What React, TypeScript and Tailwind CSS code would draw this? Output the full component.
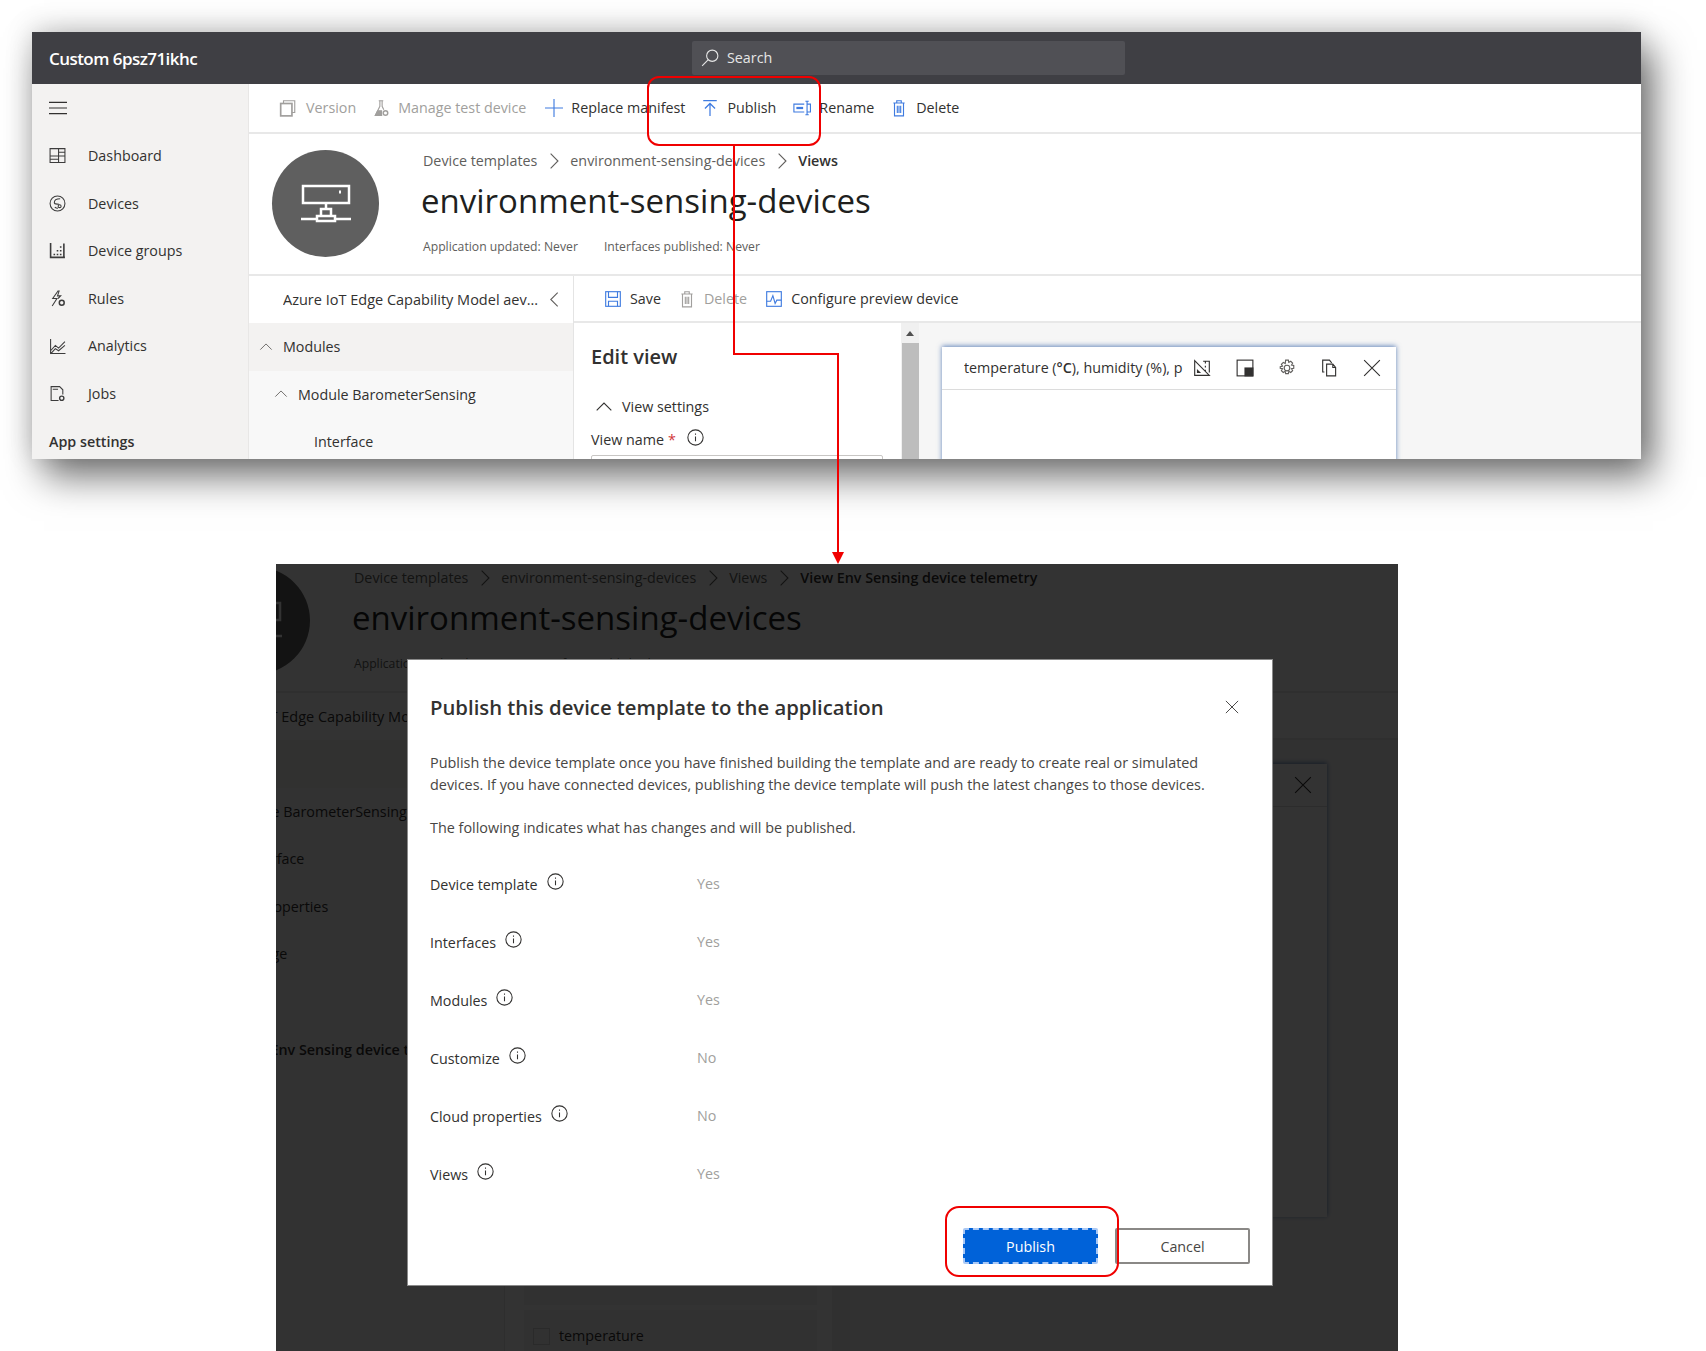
import type { ReactNode } from "react";

const Ico = ({ children, className = "w-[18px] h-[18px]" }: { children: ReactNode; className?: string }) => (
  <svg viewBox="0 0 16 16" fill="none" stroke="currentColor" strokeWidth="1" className={`shrink-0 ${className}`}>
    {children}
  </svg>
);

const InfoIcon = ({ className = "w-[17px] h-[17px] text-[#323130]" }: { className?: string }) => (
  <Ico className={className}>
    <circle cx="8" cy="8" r="7.2" />
    <path d="M8 7v4.6M8 4.2v1.2" />
  </Ico>
);

const Chevron = ({ dir = "right", className = "" }: { dir?: "right" | "left" | "up"; className?: string }) => {
  const d = dir === "right" ? "M5 1.5 11.5 8 5 14.5" : dir === "left" ? "M11 1.5 4.5 8l6.5 6.5" : "M1.5 11 8 4.5l6.5 6.5";
  return (
    <Ico className={className}>
      <path d={d} />
    </Ico>
  );
};

const navItems: { label: string; icon: ReactNode }[] = [
  { label: "Dashboard", icon: <path d="M1 1.500h14v13H1zM1 8.500h14M9 1.500v13M1 11.500h8M9 5h6" /> },
  { label: "Devices", icon: <><circle cx="8" cy="8" r="7" /><path d="M10.500 3.500C7 3.500 5 5 5 7c0 2.500 4 1 4.500 2M8.500 12.500C7 12.500 6 12 5.500 11.500" /><circle cx="10" cy="10.500" r="1.400" /></> },
  { label: "Device groups", icon: <path d="M1.500 1v13.500H15M5 12.500v-1.500M8 12.500v-1.500M8 9V7.500M11 12.500v-1.500M11 9V7.500M11 5.500V4M14 14v-12.500" strokeWidth="1.500" /> },
  { label: "Rules", icon: <><path d="M8.500 1 3.500 8h4l-4.500 7M8 1h1.500L8 5.500h3L8.500 8" /><circle cx="12" cy="12" r="2.300" strokeWidth="1.400" /></> },
  { label: "Analytics", icon: <path d="M1.500 1v13.500H15.500M1.500 12 6 7l3 2.500 6-6M1.500 15 6 10l3 2 6-5" /> },
  { label: "Jobs", icon: <><path d="M9 14.500H2V1.500h8l3 3V9M3.500 4h5" /><circle cx="12" cy="12.500" r="2" strokeWidth="1.300" /></> },
];

const Sidebar = () => (
  <aside className="w-[217px] shrink-0 bg-[#f3f2f1] border-r border-[#e8e7e6] text-[14.3px] text-[#323130]">
    <div className="h-[48px] flex items-center pl-[17px]">
      <Ico className="w-[18px] h-[18px]">
        <path d="M0 3h16M0 8h16M0 13h16" />
      </Ico>
    </div>
    {navItems.map((n) => (
      <div key={n.label} className="h-[47.6px] flex items-center pl-[17px] gap-[22px]">
        <Ico className="w-[17px] h-[17px] text-[#3c3c3c]">{n.icon}</Ico>
        <span>{n.label}</span>
      </div>
    ))}
    <div className="h-[47.6px] flex items-center pl-[17px] font-semibold">App settings</div>
  </aside>
);

const blue = "text-[#3f7be0]";
const gray = "text-[#a19f9d]";

const ToolItem = ({ icon, label, off, gap = "gap-[8px]" }: { icon: ReactNode; label: string; off?: boolean; gap?: string }) => (
  <div className={`flex items-center ${gap} ${off ? gray : "text-[#323130]"}`}>
    <Ico className={`w-[18px] h-[18px] ${off ? gray : blue}`}>{icon}</Ico>
    <span>{label}</span>
  </div>
);

const trash = <path d="M3 3.500h10M6 3.500V1.500h4v2M4 3.500v11.500h8V3.500M6.500 6v6.500M8 6v6.500M9.500 6v6.500" />;

const MainToolbar = () => (
  <div className="h-[50px] border-b-2 border-[#e8e8e8] bg-white flex items-center pl-[30px] gap-[16px] text-[14.3px]">
    <ToolItem off gap="gap-[9px]" label="Version" icon={<><rect x="1.500" y="4" width="10" height="11" strokeWidth="1.500" /><path d="M4 4V1.500h10V12h-2.500" /></>} />
    <ToolItem off label="Manage test device" icon={<><path d="M6 1.500h4M7 1.500v5L3 14.500h6M9 1.500v5l1.500 3" /><path d="M5 10.500 3 14.500h5.500v-4z" fill="currentColor" /><circle cx="12" cy="12.500" r="2" strokeWidth="1.300" /></>} />
    <ToolItem gap="gap-[8px] ml-[3px]" label="Replace manifest" icon={<path d="M8 0v16M0 8h16" />} />
    <ToolItem label="Publish" icon={<path d="M2 1.500h12M8 15V4M3.500 8.500 8 4l4.500 4.500" strokeWidth="1.100" />} />
    <ToolItem gap="gap-[8px] ml-[1px]" label="Rename" icon={<><path d="M10 4.500H.800v7H10" /><path d="M3 8h6" strokeWidth="2" /><path d="M11 2h3M11 14h3M12.500 2v12M13 4.500h2.500v7H13" /></>} />
    <ToolItem label="Delete" icon={trash} />
  </div>
);

const Crumbs = ({ items }: { items: string[] }) => (
  <div className="flex items-center gap-[7.500px] text-[14.3px] text-[#605e5c] leading-[20px]">
    {items.map((c, i) => (
      <div key={c} className="flex items-center gap-[7.500px]">
        {i > 0 && <Chevron className="w-[18px] h-[18px]" />}
        <span className={i === items.length - 1 ? "font-semibold text-[#323130]" : ""}>{c}</span>
      </div>
    ))}
  </div>
);

const treeRows: { label: string; pl: string; cls?: string; chevron?: string }[] = [
  { label: "Modules", pl: "pl-[34px]", cls: "bg-[#f3f2f1]", chevron: "left-[10px]" },
  { label: "Module BarometerSensing", pl: "pl-[49px]", chevron: "left-[25px]" },
  { label: "Interface", pl: "pl-[65px]" },
  { label: "Properties", pl: "pl-[79px]" },
  { label: "Manage", pl: "pl-[54px]" },
  { label: "", pl: "pl-[65px]" },
  { label: "View Env Sensing device telemetry", pl: "pl-[54px]", cls: "font-semibold" },
];

const TreePanel = () => (
  <div className="w-[325px] shrink-0 bg-[#f8f8f8] border-r border-[#e4e4e4] text-[14.3px] text-[#323130]">
    <div className="h-[47px] flex items-center pl-[34px] bg-white">
      <span className="w-[259px] truncate text-[14.5px]">Azure IoT Edge Capability Model aev...</span>
      <Chevron dir="left" className="ml-[4px] w-[17px] h-[17px] text-[#605e5c]" />
    </div>
    {treeRows.map((r) => (
      <div key={r.label || "blank"} className={`relative h-[47.6px] flex items-center whitespace-nowrap ${r.pl} ${r.cls ?? ""}`}>
        {r.chevron && <Chevron dir="up" className={`absolute ${r.chevron} w-[14px] h-[14px] text-[#605e5c]`} />}
        {r.label}
      </div>
    ))}
  </div>
);

const EditPanel = () => (
  <div className="w-[327px] shrink-0 bg-white px-[17px] text-[#323130]">
    <h3 className="mt-[19px] text-[20px] leading-[30px] font-semibold">Edit view</h3>
    <div className="mt-[23px] flex items-center gap-[9px] text-[14.3px] leading-[24px] pl-[4px]">
      <Chevron dir="up" className="w-[18px] h-[18px]" />
      <span>View settings</span>
    </div>
    <div className="mt-[9px] flex items-center text-[14.3px] leading-[24px]">
      <span>View name</span>
      <span className="ml-[4px] text-[#d13438]">*</span>
      <InfoIcon className="ml-[11px] -mt-[6px] w-[17px] h-[17px] text-[#323130]" />
    </div>
    <div className="mt-[3px] h-[32px] border border-[#c8c6c4] rounded-[2px] w-[292px]" />
    <div className="mt-[377px] ml-[2px] w-[293px] h-[24px] bg-[#f6f6f6]" />
    <div className="mt-[5px] ml-[2px] w-[293px] h-[52px] bg-[#f6f6f6] flex items-center gap-[9px] pl-[9px] text-[14.3px]">
      <span className="w-[17px] h-[17px] border border-[#d0d0d0]" />
      temperature
    </div>
  </div>
);

const Scrollbar = () => (
  <div className="w-[18px] shrink-0 bg-[#f0f0f0] flex flex-col items-center">
    <div className="h-[20px] flex items-center">
      <div className="w-0 h-0 border-x-[4px] border-x-transparent border-b-[5px] border-b-[#505050]" />
    </div>
    <div className="h-[300px] w-[17px] bg-[#bdbdbd]" />
  </div>
);

const TileCard = () => (
  <div className="mt-[24px] ml-[23px] w-[454px] h-[453px] bg-white shadow-[0_-1px_5px_rgba(50,95,165,0.75)]">
    <div className="h-[43px] border-b border-[#dcdcdc] flex items-center pl-[22px] text-[#323130]">
      <div className="w-[219px] overflow-hidden whitespace-nowrap text-[14.3px]">
        temperature (<span className="font-semibold">°C</span>), humidity (%), pressure (hPa)
      </div>
      <div className="ml-[10px] flex items-center gap-[24.500px]">
        <Ico className="w-[18px] h-[18px]">
          <path d="M1.500 1.500 14.500 14.500H1.500zM4 10v2h2zM9 2h5.500v10M11 2.500v1.500M11 6v1.500M11 9.500V11" />
        </Ico>
        <Ico className="w-[18px] h-[18px]">
          <rect x="1" y="1" width="14" height="14" />
          <rect x="8" y="8" width="7" height="7" fill="currentColor" />
        </Ico>
        <Ico className="w-[18px] h-[18px] text-[#605e5c]">
          <circle cx="8" cy="8" r="2.500" />
          <path d="M6.800 1h2.400l.4 2 1.700-1 1.700 1.700-1 1.700 2 .4v2.400l-2 .4 1 1.700-1.700 1.700-1.700-1-.4 2H6.800l-.4-2-1.700 1-1.700-1.700 1-1.700-2-.4V6.800l2-.4-1-1.700 1.700-1.700 1.700 1z" />
        </Ico>
        <Ico className="w-[18px] h-[18px]">
          <path d="M3 11.500H1.500V1h6l2 2.500M5 4.500h5.500l2.500 3V15H5zM10.500 4.500v3H13" />
        </Ico>
        <Ico className="w-[18px] h-[18px]">
          <path d="M1 1l14 14M15 1 1 15" />
        </Ico>
      </div>
    </div>
  </div>
);

// same page sits under both the top window and the dimmed dialog shot
const TemplatePage = ({ crumbs }: { crumbs: string[] }) => (
  <div className="w-[1392px] shrink-0 bg-white">
    <div className="h-[142px] flex border-b-2 border-[#e8e8e8]">
      <div className="ml-[23px] mt-[16px] w-[107px] h-[107px] rounded-full bg-[#5f5f5f] flex items-center justify-center text-white">
        <svg viewBox="0 0 50 40" fill="none" stroke="currentColor" strokeWidth="2.500" className="w-[50px] h-[40px]">
          <rect x="2" y="2" width="46" height="17" />
          <path d="M38 8h2" strokeWidth="3" />
          <path d="M25 19v6M20 32v-7h10v7M16 37h18v-5H16zM0 35h16M34 35h16" />
        </svg>
      </div>
      <div className="ml-[44px] pt-[17px]">
        <Crumbs items={crumbs} />
        <h1 className="mt-[7px] -ml-[2px] text-[33px] leading-[46px] text-[#201f1e] whitespace-nowrap">environment-sensing-devices</h1>
        <div className="mt-[14px] flex gap-[26px] text-[12.2px] leading-[18px] text-[#605e5c]">
          <span>Application updated: Never</span>
          <span>Interfaces published: Never</span>
        </div>
      </div>
    </div>
    <div className="flex h-[660px]">
      <TreePanel />
      <div className="flex-1 min-w-0">
        <div className="h-[47px] border-b-2 border-[#e8e8e8] flex items-center pl-[30px] gap-[17px] text-[14.3px]">
          <ToolItem label="Save" icon={<><rect x="1.500" y="1.500" width="13" height="13" /><path d="M4 1.500v5h8v-5M4 14.500V10h8v4.500" /></>} />
          <ToolItem off label="Delete" icon={trash} />
          <ToolItem gap="gap-[8px] ml-[1px]" label="Configure preview device" icon={<><rect x="1.500" y="1.500" width="13" height="13" /><path d="M1.500 10H5l2-5 2 7 1.500-3h4" /></>} />
        </div>
        <div className="flex h-[613px]">
          <EditPanel />
          <Scrollbar />
          <div className="flex-1 bg-[#f6f6f6]">
            <TileCard />
          </div>
        </div>
      </div>
    </div>
  </div>
);

const publishRows = [
  ["Device template", "Yes"],
  ["Interfaces", "Yes"],
  ["Modules", "Yes"],
  ["Customize", "No"],
  ["Cloud properties", "No"],
  ["Views", "Yes"],
];

const PublishDialog = () => (
  <div className="absolute left-[131px] top-[95px] w-[866px] h-[627px] bg-white border border-[#8a8a8a] pl-[22px] pr-[33px] text-[#323130]">
    <div className="mt-[32px] flex items-center justify-between">
      <h2 className="text-[20.3px] leading-[30px] font-semibold">Publish this device template to the application</h2>
      <Ico className="w-[14px] h-[14px] text-[#323130]">
        <path d="M1 1l14 14M15 1 1 15" />
      </Ico>
    </div>
    <p className="mt-[30px] text-[14.4px] leading-[22px] text-[#484644]">
      Publish the device template once you have finished building the template and are ready to create real or simulated devices. If you have connected devices, publishing the device template will push the latest changes to those devices.
    </p>
    <p className="mt-[21px] text-[14.4px] leading-[22px] text-[#484644]">The following indicates what has changes and will be published.</p>
    <div className="mt-[16px]">
      {publishRows.map(([label, val]) => (
        <div key={label} className="h-[58px] flex items-center text-[14.3px]">
          <div className="w-[267px] flex items-center gap-[9px]">
            <span className="mt-[2px]">{label}</span>
            <InfoIcon className="-mt-[5px] w-[17px] h-[17px] text-[#323130]" />
          </div>
          <span className="text-[#a19f9d]">{val}</span>
        </div>
      ))}
    </div>
    <div className="absolute right-[22px] bottom-[21px] flex gap-[17px] text-[14.3px]">
      <button className="w-[135px] h-[36px] pt-[1px] bg-[#0062d9] text-white rounded-[2px] border-2 border-dashed border-[#a9c8f5]">Publish</button>
      <button className="w-[135px] h-[36px] pt-[1px] bg-white text-[#484644] rounded-[2px] border-2 border-[#8a8886]">Cancel</button>
    </div>
  </div>
);

const Annotations = () => (
  <svg width="1706" height="1351" viewBox="0 0 1706 1351" fill="none" stroke="#f00000" strokeWidth="2" className="absolute inset-0 pointer-events-none">
    <rect x="648" y="77" width="172" height="68" rx="11" />
    <path d="M734 145V354H838V555" />
    <path d="M832 552h12l-6 12z" fill="#f00000" stroke="none" />
    <rect x="946" y="1207" width="172" height="69" rx="13" />
  </svg>
);

export default function App() {
  return (
    <div className="relative w-[1706px] h-[1351px] overflow-hidden bg-white font-['Open_Sans',sans-serif] pt-[32px]">
      <div className="ml-[32px] w-[1609px] h-[427px] overflow-hidden bg-white shadow-[12px_18px_36px_rgba(0,0,0,0.55),0_-4px_26px_rgba(0,0,0,0.16)]">
        <header className="h-[52px] bg-[#3f3f44] text-white flex items-center pl-[17px]">
          <span className="w-[643px] pt-[2px] text-[17px] font-semibold tracking-[-0.55px]">Custom 6psz71ikhc</span>
          <div className="w-[433px] h-[34px] rounded-[2px] bg-[#505055] flex items-center gap-[8px] pl-[9px] text-[14.3px] text-[#e6e6e6]">
            <Ico className="w-[18px] h-[18px]">
              <circle cx="10" cy="6" r="5" />
              <path d="M6.500 9.500 1 15" />
            </Ico>
            Search
          </div>
        </header>
        <div className="flex">
          <Sidebar />
          <div className="min-w-0">
            <MainToolbar />
            <TemplatePage crumbs={["Device templates", "environment-sensing-devices", "Views"]} />
          </div>
        </div>
      </div>

      <div className="relative mt-[105px] ml-[276px] w-[1122px] h-[787px] overflow-hidden">
        <div className="-ml-[96px] -mt-[13px]">
          <TemplatePage crumbs={["Device templates", "environment-sensing-devices", "Views", "View Env Sensing device telemetry"]} />
        </div>
        <div className="absolute inset-0 bg-black/80" />
        <PublishDialog />
      </div>

      <Annotations />
    </div>
  );
}
